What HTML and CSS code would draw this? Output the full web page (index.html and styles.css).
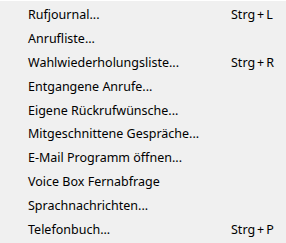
FILE: index.html
```html
<!DOCTYPE html>
<html lang="de">
<head>
<meta charset="utf-8">
<link rel="stylesheet" href="styles.css">
</head>
<body>
<ul class="menu">
  <li class="item"><span class="label">Rufjournal...</span><span class="key">Strg<span class="plus">+</span>L</span></li>
  <li class="item"><span class="label">Anrufliste...</span></li>
  <li class="item"><span class="label">Wahlwiederholungsliste...</span><span class="key">Strg<span class="plus">+</span>R</span></li>
  <li class="item"><span class="label">Entgangene Anrufe...</span></li>
  <li class="item"><span class="label">Eigene Rückrufwünsche...</span></li>
  <li class="item"><span class="label">Mitgeschnittene Gespräche...</span></li>
  <li class="item"><span class="label">E-Mail Programm öffnen...</span></li>
  <li class="item"><span class="label">Voice Box Fernabfrage</span></li>
  <li class="item"><span class="label">Sprachnachrichten...</span></li>
  <li class="item"><span class="label">Telefonbuch...</span><span class="key">Strg<span class="plus">+</span>P</span></li>
</ul>
</body>
</html>
```
FILE: styles.css
```css
html, body {
  margin: 0;
  padding: 0;
  background: #f0f0f0;
}
body {
  width: 286px;
  height: 243px;
  overflow: hidden;
  border-top: 1px solid #ffffff;
  box-sizing: border-box;
  font-family: "Noto Sans", "Open Sans", sans-serif;
  font-size: 12.5px;
  color: #000000;
}
.menu {
  list-style: none;
  margin: 0;
  padding: 2px 12px 0 28px;
  display: flex;
  flex-direction: column;
}
.item {
  height: 23.8px;
  display: flex;
  align-items: center;
  justify-content: space-between;
  white-space: nowrap;
}
.key {
  width: 43px;
  text-align: left;
}
.plus {
  margin: 0 2px;
}
```
